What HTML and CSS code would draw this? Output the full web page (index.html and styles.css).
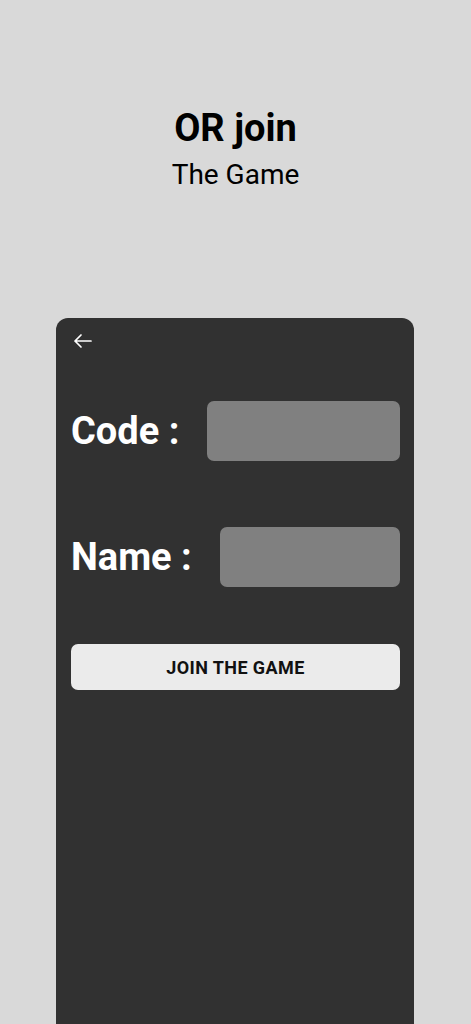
FILE: index.html
```html
<!DOCTYPE html>
<html>
<head>
<meta charset="utf-8">
<link rel="stylesheet" href="styles.css">
</head>
<body>
<div class="page">
  <header class="header">
    <h1 class="title">OR join</h1>
    <p class="subtitle">The Game</p>
  </header>
  <section class="card">
    <div class="back">
      <svg width="24" height="24" viewBox="0 0 24 24" fill="none" stroke="#ffffff" stroke-width="1.7" stroke-linecap="round" stroke-linejoin="round"><path d="M20 12H4M10 6l-6 6 6 6"/></svg>
    </div>
    <div class="row row-code">
      <span class="label">Code :</span>
      <div class="field"></div>
    </div>
    <div class="row row-name">
      <span class="label">Name :</span>
      <div class="field"></div>
    </div>
    <button class="join">JOIN THE GAME</button>
  </section>
</div>
</body>
</html>
```
FILE: styles.css
```css
html, body {
  margin: 0;
  padding: 0;
}
body {
  background: #d9d9d9;
  font-family: Roboto, "Liberation Sans", sans-serif;
  overflow: hidden;
}
.page {
  width: 471px;
  height: 1024px;
  display: flex;
  flex-direction: column;
}
.header {
  display: flex;
  flex-direction: column;
  align-items: center;
  padding-top: 106px;
  height: 318px;
  flex: 0 0 318px;
  box-sizing: border-box;
}
.title {
  margin: 0;
  font-size: 38px;
  font-weight: 700;
  line-height: 44px;
  color: #000;
}
.subtitle {
  margin: 8px 0 0;
  font-size: 28px;
  font-weight: 400;
  line-height: 34px;
  color: #000;
}
.card {
  margin: 0 57px 0 56px;
  flex: 1;
  background: #313131;
  border-radius: 12px 12px 0 0;
  padding: 0 14px 0 15px;
  display: flex;
  flex-direction: column;
}
.back {
  height: 24px;
  margin-top: 11px;
  display: flex;
}
.row {
  display: flex;
  align-items: center;
  gap: 28px;
}
.row-code {
  margin-top: 48px;
}
.row-name {
  margin-top: 66px;
}
.label {
  color: #fff;
  font-size: 38px;
  font-weight: 700;
  white-space: nowrap;
}
.field {
  flex: 1;
  height: 60px;
  background: #808080;
  border-radius: 7px;
}
.join {
  margin-top: 57px;
  height: 46px;
  border: none;
  border-radius: 7px;
  background: #ebebeb;
  color: #111;
  font-family: Roboto, "Liberation Sans", sans-serif;
  font-size: 18px;
  font-weight: 700;
  letter-spacing: 0.4px;
  padding: 0;
}
```
